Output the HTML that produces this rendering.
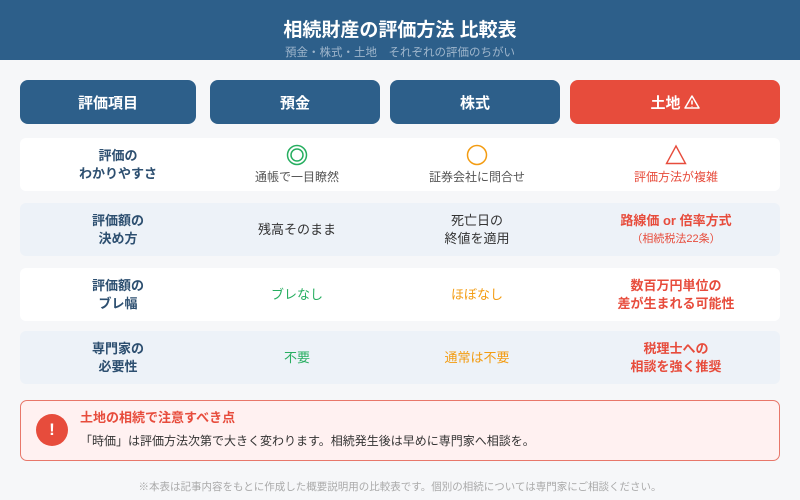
<!DOCTYPE html>
<html><head><meta charset="utf-8"><style>
*{margin:0;padding:0;box-sizing:border-box}
body{width:800px;height:500px;background:#f6f7f9;font-family:"Liberation Sans","Noto Sans CJK JP",sans-serif;position:relative;overflow:hidden}
.hdr{position:absolute;left:0;top:0;width:800px;height:60px;background:#2d5f8a}
.t{position:absolute;left:0;width:800px;text-align:center}
.btn{position:absolute;top:80px;height:44px;border-radius:8px;background:#2d5f8a;color:#fff;font-weight:bold;font-size:15px;display:flex;align-items:center;justify-content:center}
.row{position:absolute;left:20px;width:760px;height:53px;border-radius:6px}
.c{position:absolute;top:0;height:100%;display:flex;flex-direction:column;align-items:center;justify-content:center;text-align:center;font-size:13px;line-height:18px}
.lab{left:0;width:196px;color:#2d4f70;font-weight:bold}
.c2{left:192px;width:170px;color:#333}
.c3{left:372px;width:170px;color:#333}
.c4{left:552px;width:208px;color:#e74c3c}
</style></head><body>
<div class="hdr"></div>
<div class="t" style="top:15px;color:#fff;font-size:19px;font-weight:bold">相続財産の評価方法 比較表</div>
<div class="t" style="top:44px;color:#9fb6cc;font-size:11.5px">預金・株式・土地　それぞれの評価のちがい</div>
<div class="btn" style="left:20px;width:176px">評価項目</div>
<div class="btn" style="left:210px;width:170px">預金</div>
<div class="btn" style="left:390px;width:170px">株式</div>
<div class="btn" style="left:570px;width:210px;background:#e74c3c">土地 <svg width="16" height="16" viewBox="0 0 16 16" style="margin-left:3px"><path d="M8 2 L15 14 H1 Z" fill="none" stroke="#fff" stroke-width="1.5" stroke-linejoin="round"/><path d="M8 6.5v4M8 12v.5" stroke="#fff" stroke-width="1.6"/></svg></div>

<div class="row" style="top:138px;background:#fff">
<div class="c lab">評価の<br>わかりやすさ</div>
<div class="c c2"><svg width="22" height="22"><circle cx="11" cy="11" r="9.5" fill="none" stroke="#27ae60" stroke-width="1.5"/><circle cx="11" cy="11" r="6" fill="none" stroke="#27ae60" stroke-width="1.5"/></svg><span style="font-size:12px;color:#555;margin-top:2px">通帳で一目瞭然</span></div>
<div class="c c3"><svg width="22" height="22"><circle cx="11" cy="11" r="9.5" fill="none" stroke="#f39c12" stroke-width="1.5"/></svg><span style="font-size:12px;color:#555;margin-top:2px">証券会社に問合せ</span></div>
<div class="c c4"><svg width="22" height="22"><path d="M11 2 L20.5 19.5 H1.5 Z" fill="none" stroke="#e74c3c" stroke-width="1.4"/></svg><span style="font-size:12px;margin-top:2px">評価方法が複雑</span></div>
</div>
<div class="row" style="top:203px;background:#edf2f8">
<div class="c lab">評価額の<br>決め方</div>
<div class="c c2">残高そのまま</div>
<div class="c c3">死亡日の<br>終値を適用</div>
<div class="c c4"><b>路線価 or 倍率方式</b><span style="font-size:11px">（相続税法22条）</span></div>
</div>
<div class="row" style="top:268px;background:#fff">
<div class="c lab">評価額の<br>ブレ幅</div>
<div class="c c2" style="color:#27ae60">ブレなし</div>
<div class="c c3" style="color:#f39c12">ほぼなし</div>
<div class="c c4" style="font-weight:bold">数百万円単位の<br>差が生まれる可能性</div>
</div>
<div class="row" style="top:331px;background:#edf2f8">
<div class="c lab">専門家の<br>必要性</div>
<div class="c c2" style="color:#27ae60">不要</div>
<div class="c c3" style="color:#f39c12">通常は不要</div>
<div class="c c4" style="font-weight:bold">税理士への<br>相談を強く推奨</div>
</div>

<div style="position:absolute;left:20px;top:400px;width:760px;height:61px;border:1.5px solid #e8776a;border-radius:7px;background:#fff1f1"></div>
<div style="position:absolute;left:36px;top:414px;width:32px;height:32px;border-radius:50%;background:#e74c3c;color:#fff;font-weight:bold;font-size:17px;text-align:center;line-height:32px">!</div>
<div style="position:absolute;left:80px;top:407px;font-size:13px;font-weight:bold;color:#e74c3c">土地の相続で注意すべき点</div>
<div style="position:absolute;left:80px;top:432px;font-size:12px;color:#333">「時価」は評価方法次第で大きく変わります。相続発生後は早めに専門家へ相談を。</div>
<div class="t" style="top:479px;font-size:10.5px;color:#aaa">※本表は記事内容をもとに作成した概要説明用の比較表です。個別の相続については専門家にご相談ください。</div>
</body></html>
